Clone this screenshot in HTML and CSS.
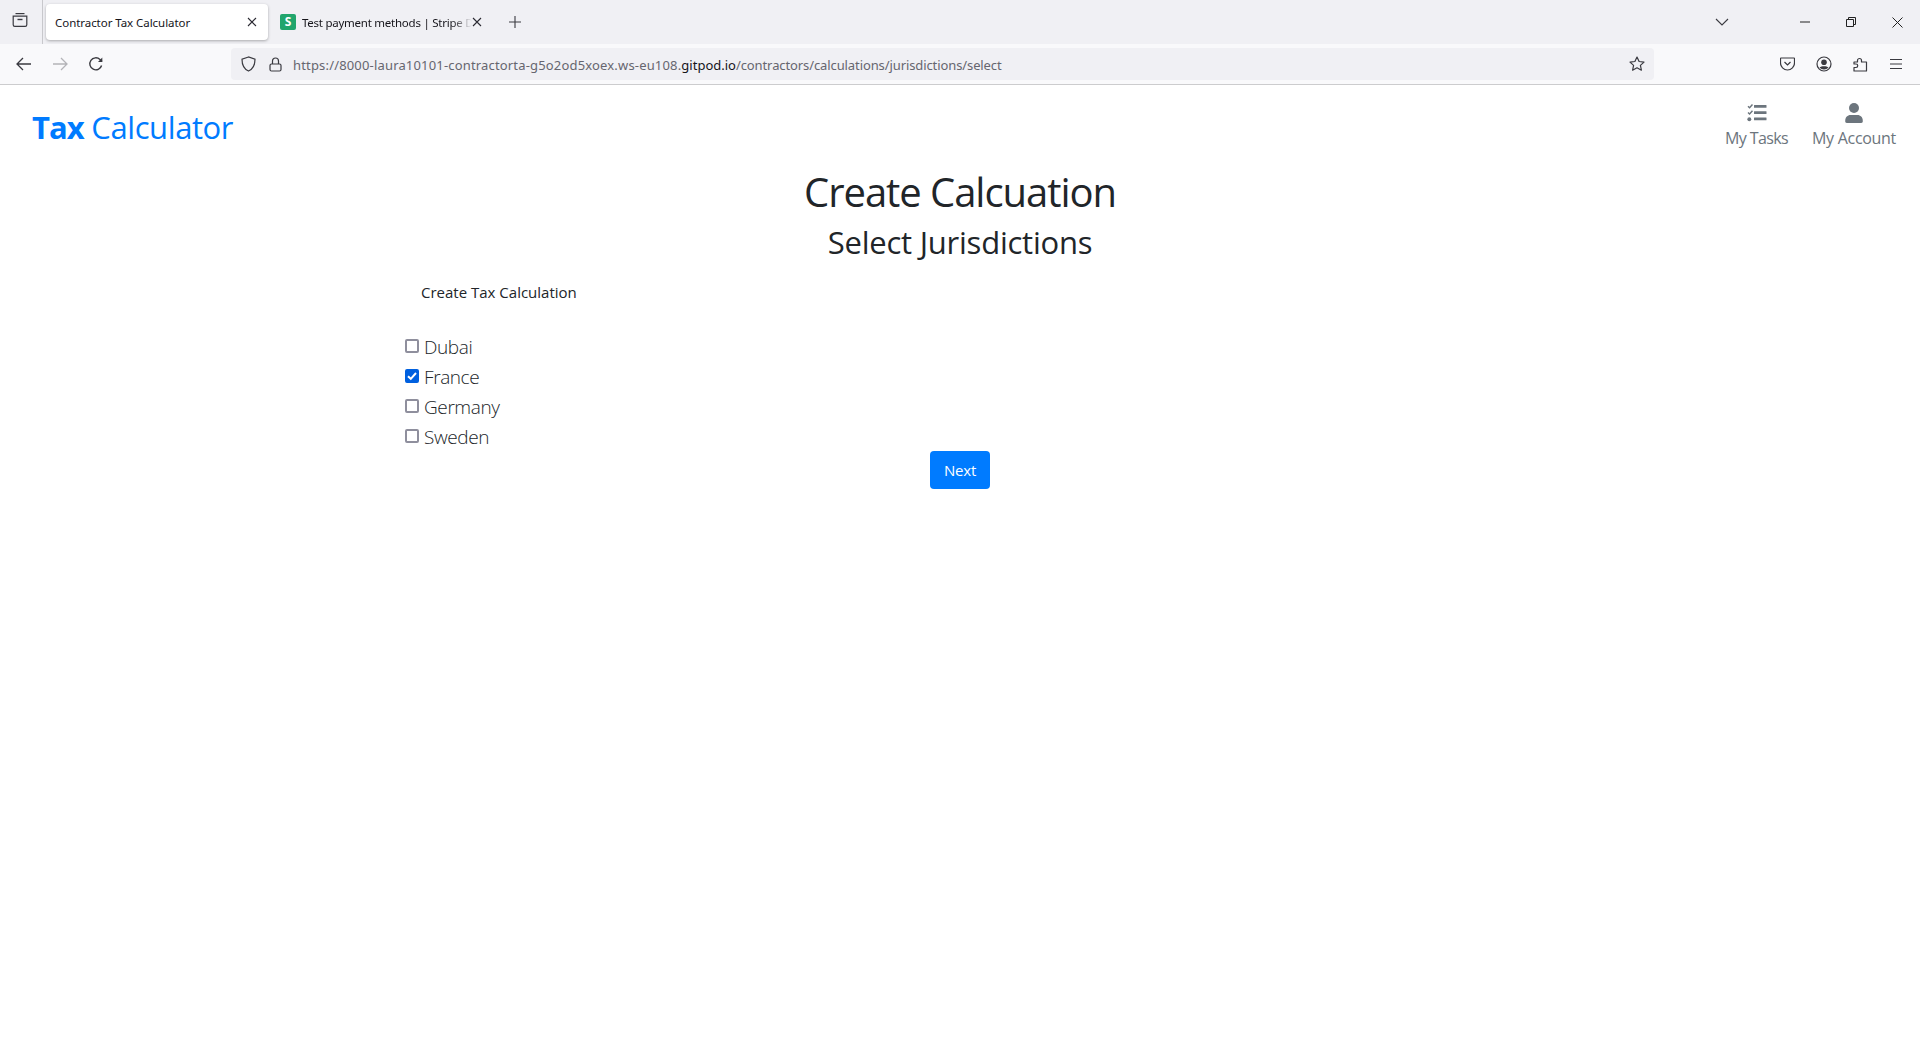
FILE: index.html
```html
<!DOCTYPE html>
<html lang="en">
<head>
<meta charset="utf-8">
<title>Contractor Tax Calculator</title>
<link rel="stylesheet" href="styles.css">
</head>
<body>
<div class="chrome">
  <div class="tabbar">
    <div class="tabs-btn">
      <svg width="16" height="16" viewBox="0 0 16 16" fill="none" stroke="#3a3a40" stroke-width="1.200"><path d="M3.500 1.600h9"/><path d="M1.200 4.200h13.600v8.600a1.600 1.600 0 0 1-1.600 1.600H2.800a1.600 1.600 0 0 1-1.600-1.600z"/><path d="M5.500 7.500h5" stroke-width="1.400"/></svg>
    </div>
    <div class="tab active">
      <span class="tab-title">Contractor Tax Calculator</span>
      <svg class="x" width="10" height="10" viewBox="0 0 10 10" stroke="#2b2a33" stroke-width="1.100"><path d="M1 1l8 8M9 1l-8 8"/></svg>
    </div>
    <div class="tab second">
      <span class="favicon">S</span>
      <span class="tab-title fade">Test payment methods | Stripe D</span>
      <svg class="x" width="10" height="10" viewBox="0 0 10 10" stroke="#2b2a33" stroke-width="1.100"><path d="M1 1l8 8M9 1l-8 8"/></svg>
    </div>
    <svg class="plus" width="12" height="12" viewBox="0 0 12 12" stroke="#3a3a40" stroke-width="1.100"><path d="M6 0v12M0 6h12"/></svg>
    <div class="spacer"></div>
    <svg class="chev" width="14" height="8" viewBox="0 0 14 8" fill="none" stroke="#3a3a40" stroke-width="1.100"><path d="M1 1l6 6 6-6"/></svg>
    <div class="winbtns">
      <svg width="10" height="10" viewBox="0 0 10 10" stroke="#222" stroke-width="1"><path d="M0 5h10"/></svg>
      <svg width="10" height="10" viewBox="0 0 10 10" fill="none" stroke="#222" stroke-width="1"><path d="M.5 2.500h7v7h-7z"/><path d="M2.500 2.500v-2h7v7h-2"/></svg>
      <svg width="11" height="11" viewBox="0 0 11 11" stroke="#222" stroke-width="1"><path d="M.5.5l10 10M10.500.5l-10 10"/></svg>
    </div>
  </div>
  <div class="toolbar">
    <svg class="nav-ic" width="16" height="14" viewBox="0 0 16 14" fill="none" stroke="#3a3a40" stroke-width="1.300"><path d="M15 7H1.500M7 1L1 7l6 6"/></svg>
    <svg class="nav-ic" width="16" height="14" viewBox="0 0 16 14" fill="none" stroke="#b4b4b8" stroke-width="1.300"><path d="M1 7h13.500M9 1l6 6-6 6"/></svg>
    <svg class="nav-ic reload" width="16" height="16" viewBox="0 0 16 16" fill="none" stroke="#3a3a40" stroke-width="1.400"><path d="M13.600 9.500A6 6 0 1 1 12 3.500L14 5.500"/><path d="M14.300 1.500v4.400H10" fill="#3a3a40" stroke="none"/></svg>
    <div class="urlbar">
      <svg width="15" height="16" viewBox="0 0 15 16" fill="none" stroke="#3a3a40" stroke-width="1.200"><path d="M7.500 1L1 3.200C1 9 3 13 7.500 15 12 13 14 9 14 3.200z"/></svg>
      <svg width="13" height="15" viewBox="0 0 13 15" fill="none" stroke="#3a3a40" stroke-width="1.200"><path d="M3.500 7V4a3 3 0 0 1 6 0v3"/><rect x="1" y="7" width="11" height="7" rx="1.500"/></svg>
      <span class="url">https://8000-laura10101-contractorta-g5o2od5xoex.ws-eu108.<b>gitpod.io</b><span class="url-tail">/contractors/calculations/jurisdictions/select</span></span>
      <svg class="star" width="16" height="16" viewBox="0 0 16 16" fill="none" stroke="#3a3a40" stroke-width="1.200"><path d="M8 1l2.100 4.500 4.900.6-3.600 3.300 1 4.800L8 11.800l-4.400 2.400 1-4.800L1 6.100l4.900-.6z" stroke-linejoin="round"/></svg>
    </div>
    <div class="tool-icons">
      <svg width="15" height="14" viewBox="0 0 15 14" fill="none" stroke="#3a3a40" stroke-width="1.200"><path d="M1 1h13a.5.5 0 0 1 .5.5V6a7 7 0 0 1-14 0V1.500A.5.500 0 0 1 1 1z"/><path d="M4.500 5l3 3 3-3"/></svg>
      <svg width="16" height="16" viewBox="0 0 16 16" fill="none" stroke="#3a3a40" stroke-width="1.200"><circle cx="8" cy="8" r="7"/><circle cx="8" cy="6.300" r="2.800" fill="#3a3a40" stroke="none"/><path d="M3.500 11.500c2-1.600 7-1.600 9 0-2.200 2.600-6.800 2.600-9 0z" fill="#3a3a40" stroke="none"/></svg>
      <svg width="15" height="16" viewBox="0 0 15 16" fill="none" stroke="#3a3a40" stroke-width="1.200" stroke-linejoin="round"><path d="M1 6h3.500V4.500a2 2 0 0 1 4 0V6H13.500v9H1v-3.500h2a1.700 1.700 0 0 0 0-3.500H1z"/></svg>
      <svg width="14" height="12" viewBox="0 0 14 12" stroke="#3a3a40" stroke-width="1.200"><path d="M1 1.500h12M1 6h12M1 10.500h12"/></svg>
    </div>
  </div>
</div>

<header class="site-header">
  <a class="brand"><b>Tax</b> Calculator</a>
  <nav class="site-nav">
    <a class="nav-item tasks">
      <svg width="21" height="20" viewBox="0 0 512 512" fill="#6c757d"><path d="M139 27l-62 70-27-24-24 26 53 48 88-98z"/><path d="M139 187l-62 70-27-24-24 26 53 48 88-98z"/><circle cx="72" cy="416" r="50"/><rect x="192" y="48" width="320" height="76" rx="12"/><rect x="192" y="208" width="320" height="76" rx="12"/><rect x="192" y="368" width="320" height="76" rx="12"/></svg>
      <span>My Tasks</span>
    </a>
    <a class="nav-item">
      <svg width="20" height="22" viewBox="0 0 448 512" fill="#6c757d"><circle cx="224" cy="128" r="128"/><path d="M134 304h180c74 0 134 60 134 134v26a48 48 0 0 1-48 48H48a48 48 0 0 1-48-48v-26c0-74 60-134 134-134z"/></svg>
      <span>My Account</span>
    </a>
  </nav>
</header>

<main class="container">
  <h1>Create Calcuation</h1>
  <h2>Select Jurisdictions</h2>
  <form>
    <p class="form-title">Create Tax Calculation</p>
    <ul class="juris">
      <li><label><span class="box"></span>Dubai</label></li>
      <li><label><span class="box checked"><svg width="10" height="10" viewBox="0 0 10 10" fill="none" stroke="#fff" stroke-width="2"><path d="M1 5.200l2.800 2.600L9 2"/></svg></span>France</label></li>
      <li><label><span class="box"></span>Germany</label></li>
      <li><label><span class="box"></span>Sweden</label></li>
    </ul>
    <div class="actions"><button type="button" class="btn">Next</button></div>
  </form>
</main>
</body>
</html>
```
FILE: styles.css
```css
* { box-sizing: border-box; }
html, body { margin: 0; padding: 0; background: #fff; }
body { font-family: "Open Sans", "Noto Sans", sans-serif; color: #212529; height: 1040px; overflow: hidden; }
svg { display: block; flex: none; }

.chrome { height: 85px; border-bottom: 1px solid #ccccce; font-family: "Noto Sans", sans-serif; }
.tabbar { height: 44px; background: #f0f0f4; display: flex; align-items: center; position: relative; }
.tabs-btn { width: 43px; height: 44px; padding: 12px 0 0 12px; border-right: 1px solid #c8c8cc; }
.tab { height: 36px; display: flex; align-items: center; font-size: 11.500px; color: #15141a; }
.tab.active { width: 222px; margin-left: 3px; padding: 0 11px 0 9px; background: #fff; border-radius: 4px; box-shadow: 0 1px 3px rgba(0,0,0,.3); justify-content: space-between; }
.tab.second { padding-left: 12px; }
.tab-title { white-space: nowrap; letter-spacing: -.05px; }
.fade { width: 170px; margin-left: 6px; overflow: hidden; letter-spacing: -.25px; -webkit-mask-image: linear-gradient(90deg, #000 88%, transparent); mask-image: linear-gradient(90deg, #000 88%, transparent); }
.favicon { width: 16px; height: 16px; background: #21a56c; color: #fff; border-radius: 2px; font-size: 12px; font-weight: 700; line-height: 16px; text-align: center; flex: none; }
.plus { margin-left: 27px; }
.spacer { flex: 1; }
.chev { margin-right: 71px; }
.winbtns { display: flex; align-items: center; gap: 36px; padding-right: 17px; }

.toolbar { height: 40px; background: #f9f9fb; display: flex; align-items: center; padding-left: 16px; }
.nav-ic { margin-right: 20px; }
.nav-ic.reload { margin-right: 0; }
.urlbar { width: 1423px; height: 32px; margin-left: 127px; background: #f0f0f4; border-radius: 4px; display: flex; align-items: center; padding: 0 9px 0 10px; gap: 13px; }
.url { font-size: 13px; color: #66666f; letter-spacing: .17px; white-space: nowrap; flex: 1; margin-left: -2px; padding-top: 1px; }
.url b { font-weight: 400; color: #15141a; letter-spacing: 0; }
.url-tail { letter-spacing: -.1px; }
.tool-icons { flex: 1; display: flex; align-items: center; justify-content: flex-end; gap: 21px; padding-right: 17px; }

.site-header { height: 83px; display: flex; justify-content: space-between; align-items: flex-start; padding: 0 24px 0 32px; }
.brand { font-size: 31px; line-height: 44px; color: #007bff; margin-top: 20px; letter-spacing: -.4px; white-space: nowrap; }
.brand b { font-weight: 700; letter-spacing: -1px; }
.site-nav { display: flex; gap: 24px; padding-top: 18px; }
.nav-item { display: flex; flex-direction: column; align-items: center; gap: 4px; color: #6c757d; font-size: 16px; letter-spacing: -.3px; line-height: 22px; white-space: nowrap; }
.nav-item.tasks { letter-spacing: -.6px; }
.nav-item svg { height: 20px; }

.container { width: 1140px; margin: 0 auto; padding: 0 15px; }
h1 { margin: 0; text-align: center; font-size: 40px; font-weight: 400; line-height: 48px; letter-spacing: -1.050px; }
h2 { margin: 7px 0 0; text-align: center; font-size: 31px; font-weight: 400; line-height: 38px; letter-spacing: -.23px; }
.form-title { margin: 19px 0 0 16px; font-size: 15px; line-height: 24px; }
.juris { list-style: none; margin: 28px 0 0; padding: 0; font-size: 19px; font-weight: 300; line-height: 30px; color: #212529; letter-spacing: -.4px; }
.juris label { display: flex; align-items: center; gap: 5px; }
.box { width: 14px; height: 14px; border: 2px solid #8f8f9d; border-radius: 2px; background: #fff; margin-top: -2px; display: flex; align-items: center; justify-content: center; flex: none; }
.box.checked { background: #0060df; border-color: #0060df; }
.actions { text-align: center; margin-top: -1px; }
.btn { width: 60px; height: 38px; border: 0; border-radius: 4px; background: #007bff; color: #fff; font: 15px "Open Sans", sans-serif; letter-spacing: -.2px; padding: 0; }
```
